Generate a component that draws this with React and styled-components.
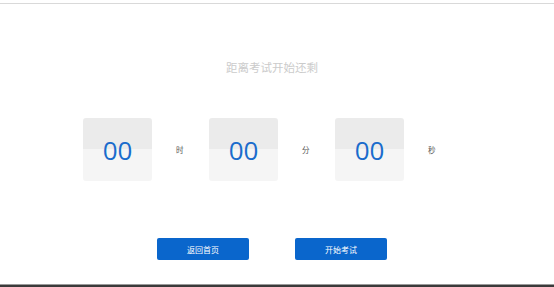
import React from 'react';
import styled, { createGlobalStyle } from 'styled-components';

const GlobalStyle = createGlobalStyle`
  html, body {
    margin: 0;
    padding: 0;
    background: #fff;
    overflow: hidden;
  }
  body {
    font-family: "Noto Sans CJK SC", "Noto Sans", sans-serif;
  }
`;

const Page = styled.div`
  height: 287px;
  display: flex;
  flex-direction: column;
`;

const TopRule = styled.div`
  margin-top: 3px;
  height: 1px;
  background: #d9d9d9;
`;

const Content = styled.div`
  flex: 1;
  width: 544px;
  display: flex;
  flex-direction: column;
  align-items: center;
`;

const Title = styled.div`
  margin-top: 55px;
  font-size: 11.5px;
  line-height: 16px;
  color: #cbcbcb;
`;

const Countdown = styled.div`
  margin-top: 43px;
  display: flex;
  align-items: center;
`;

const Unit = styled.div`
  width: 126px;
  display: flex;
  align-items: center;
`;

const Box = styled.div`
  width: 69px;
  height: 63px;
  border-radius: 3px;
  background: linear-gradient(#ebebeb 0, #ebebeb 31px, #f5f5f5 31px, #f5f5f5 100%);
  display: flex;
  align-items: center;
  justify-content: center;
  font-family: "Open Sans", "Liberation Sans", sans-serif;
  font-size: 26px;
  color: #1a6ccc;
`;

const Label = styled.span`
  margin-left: 24px;
  font-size: 7.5px;
  color: #555;
`;

const Actions = styled.div`
  margin-top: 57px;
  display: flex;
  gap: 46px;
`;

const Button = styled.button`
  width: 92px;
  height: 22px;
  border: none;
  border-radius: 2px;
  background: #0a66cc;
  color: #fff;
  font-family: "Noto Sans CJK SC", sans-serif;
  font-size: 8px;
  padding: 0;
  cursor: pointer;
`;

const BottomBar = styled.div`
  height: 2px;
  border-top: 1px solid #9a9a9a;
  background: #3a3a3a;
`;

const units = ['时', '分', '秒'];

const App = () => (
  <>
    <GlobalStyle />
    <Page>
      <TopRule />
      <Content>
        <Title>距离考试开始还剩</Title>
        <Countdown>
          {units.map(u => (
            <Unit key={u}>
              <Box>00</Box>
              <Label>{u}</Label>
            </Unit>
          ))}
        </Countdown>
        <Actions>
          <Button>返回首页</Button>
          <Button>开始考试</Button>
        </Actions>
      </Content>
      <BottomBar />
    </Page>
  </>
);

export default App;
